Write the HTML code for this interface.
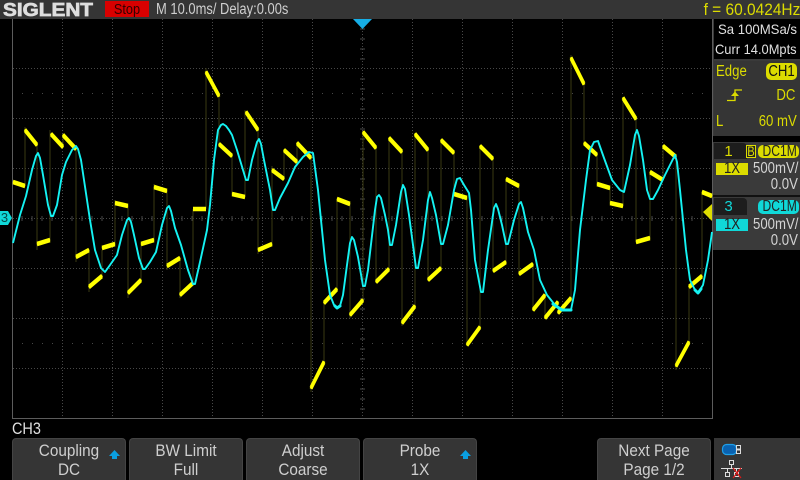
<!DOCTYPE html>
<html><head><meta charset="utf-8"><style>
html,body{margin:0;padding:0;background:#000;}
#s{position:relative;width:800px;height:480px;overflow:hidden;background:#000;font-family:"Liberation Sans",sans-serif;color:#d4d4d4;}
.a{position:absolute;white-space:nowrap;}
.l{transform:scaleX(.85);transform-origin:left center;}
.r{transform:scaleX(.85);transform-origin:right center;}
.c{transform:scaleX(.85);transform-origin:center center;}
.k{position:absolute;top:438px;height:42px;background:#353535;border:1px solid #444;border-bottom:none;border-radius:4px 4px 0 0;box-sizing:border-box;text-align:center;font-size:17px;line-height:19px;color:#cfcfcf;padding-top:2px;}
.k div{transform:scaleX(.9);white-space:nowrap;}
svg{position:absolute;left:0;top:0;}
</style></head><body><div id="s">
<div class="a" style="left:0;top:0;width:800px;height:19px;background:#353535"></div>
<div class="a" style="left:105px;top:1px;width:44px;height:16px;background:#d80000;"></div>
<div class="a c" style="left:105px;top:1px;width:44px;color:#300;font-size:15px;line-height:17px;text-align:center">Stop</div>
<div class="a" style="left:156px;top:1px;font-size:15.500px;line-height:18px;color:#cfcfcf;transform:scaleX(.835);transform-origin:left center">M 10.0ms/ Delay:0.00s</div>
<div class="a" style="right:0;top:0;font-size:17px;line-height:19px;color:#dcdc00;transform:scaleX(.91);transform-origin:right center">f = 60.0424Hz</div>

<svg width="800" height="480" viewBox="0 0 800 480">
<text x="3" y="16" font-family="Liberation Sans" font-weight="bold" font-size="18.500" textLength="90" lengthAdjust="spacingAndGlyphs" fill="#dedede" stroke="#dedede" stroke-width=".7">SIGLENT</text>
<g fill="none" stroke="#484848" stroke-width="1" shape-rendering="crispEdges">
<path stroke-dasharray="1 2" d="M62.500 19V418M112.500 19V418M162.500 19V418M212.500 19V418M262.500 19V418M312.500 19V418M412.500 19V418M462.500 19V418M512.500 19V418M562.500 19V418M612.500 19V418M662.500 19V418M13 68.500H712M13 118.500H712M13 168.500H712M13 268.500H712M13 318.500H712M13 368.500H712"/>
<path stroke-dasharray="1 2" d="M362.500 19V418M13 218.500H712"/>
<path stroke-dasharray="1 9" d="M22 93.500H712M22 343.500H712"/>
<path d="M22 216V221M32 216V221M42 216V221M52 216V221M72 216V221M82 216V221M92 216V221M102 216V221M122 216V221M132 216V221M142 216V221M152 216V221M172 216V221M182 216V221M192 216V221M202 216V221M222 216V221M232 216V221M242 216V221M252 216V221M272 216V221M282 216V221M292 216V221M302 216V221M322 216V221M332 216V221M342 216V221M352 216V221M372 216V221M382 216V221M392 216V221M402 216V221M422 216V221M432 216V221M442 216V221M452 216V221M472 216V221M482 216V221M492 216V221M502 216V221M522 216V221M532 216V221M542 216V221M552 216V221M572 216V221M582 216V221M592 216V221M602 216V221M622 216V221M632 216V221M642 216V221M652 216V221M672 216V221M682 216V221M692 216V221M702 216V221"/>
<path d="M360 29H365M360 39H365M360 49H365M360 59H365M360 79H365M360 89H365M360 99H365M360 109H365M360 129H365M360 139H365M360 149H365M360 159H365M360 179H365M360 189H365M360 199H365M360 209H365M360 229H365M360 239H365M360 249H365M360 259H365M360 279H365M360 289H365M360 299H365M360 309H365M360 329H365M360 339H365M360 349H365M360 359H365M360 379H365M360 389H365M360 399H365M360 409H365"/>
<path stroke="#5c5c5c" d="M12.500 19V418.500H712.500V19"/>
</g>
<path fill="none" stroke="#3a3a12" stroke-width="1" shape-rendering="crispEdges" d="M25 186V127M37 145V250M50 240V130M63 147V135M76 149V262M89 250V292M102 276V250M115 244V200M128 206V298M141 280V244M154 240V184M167 191V270M180 258V298M193 283V209M206 209V68M219 96V144M232 156V194M245 197V110M258 130V254M272 244V166M284 179V150M297 162V143M311 158V392M324 362V303M337 289V199M350 204V318M363 300V132M376 148V282M389 269V138M402 152V326M415 306V134M428 150V280M441 268V140M454 153V194M467 198V345M480 327V146M493 159V271M506 262V179M519 186V274M533 264V310M545 295V318M558 302V313M571 298V55M584 84V143M597 155V184M610 188V203M623 206V98M636 119V242M650 238V172M663 180V146M676 157V370M689 342V287M702 276V192"/>
<defs><path id="y" fill="none" stroke="#ffff00" stroke-width="3" d="M13 182L25 186M25 130L37 145M37 244L50 240M51 134L63 147M63 135L76 149M76 257L89 250M89 287L102 276M102 248L115 244M115 203L128 206M128 293L141 280M141 244L154 240M154 187L167 191M167 266L180 258M180 295L193 283M193 209L206 209M206 72L219 96M219 144L232 156M232 194L245 197M246 112L258 130M258 250L272 244M272 170L284 179M284 150L297 162M297 143L311 158M311 388L324 362M324 303L337 289M337 199L350 204M350 315L363 300M363 132L376 148M376 282L389 269M389 138L402 152M402 323L415 306M415 134L428 150M428 280L441 268M441 140L454 153M454 194L467 198M467 345L480 327M480 146L493 159M493 271L506 262M506 179L519 186M519 274L533 264M533 310L545 295M545 318L558 302M558 313L571 298M571 58L584 84M584 143L597 155M597 184L610 188M610 203L623 206M623 98L636 119M636 242L650 238M650 172L663 180M663 146L676 157M676 366L689 342M689 287L702 276M702 192L712 196"/></defs>
<use href="#y" y="-.800"/><use href="#y" y=".800"/>
<polyline fill="none" stroke="#14f2f2" stroke-width="1.900" stroke-linejoin="round" points="13,243 20,215 26,196 32,170 36,156 38,153 40,158 43,175 48,205 51,216 53,216 57,205 62,175 66,162 72,150 76,146 78,149 81,160 84,180 90,220 95,250 101,268 105,272 110,265 117,255 122,235 127,220 129,218 131,222 134,235 139,258 143,269 145,269 150,262 156,252 162,225 167,208 169,206 171,211 175,228 181,245 188,270 193,284 195,284 200,262 207,230 210,205 214,160 218,130 221,125 223,124 226,126 229,130 232,135 237,150 243,170 246,180 248,180 252,160 257,142 259,139 261,144 264,160 270,190 273,210 275,210 280,198 288,183 295,167 303,157 309,152 313,153 318,190 325,260 330,295 334,305 337,308 340,306 343,295 347,265 350,243 352,237 354,240 358,257 363,286 365,286 368,270 375,210 377,197 379,195 381,198 385,215 388,230 390,245 392,245 396,225 401,192 403,185 405,189 409,215 413,245 416,268 418,268 423,240 428,200 430,192 432,198 436,215 441,244 443,244 448,225 454,190 457,179 460,178 464,185 469,193 471,210 475,260 481,292 483,292 488,250 494,208 496,204 498,209 502,225 506,244 508,244 514,220 519,204 521,202 523,208 528,232 534,250 540,280 547,295 555,305 562,310 571,310 575,290 580,230 586,180 590,150 594,142 598,141 604,158 612,180 620,190 624,192 630,165 635,135 637,130 639,136 643,160 647,190 650,199 653,199 658,190 665,175 675,155 677,162 680,190 686,250 690,280 695,290 698,293 703,285 708,260 712,232"/>
<path fill="none" stroke="#14f2f2" stroke-width="3" stroke-linecap="round" stroke-linejoin="round" d="M335 306L337 308L340 306M553 304L562 310L571 310M695 290L698 293L701 289"/>
<path fill="#16aee6" d="M353 19H372L362.500 29Z"/>
<path fill="#10d8d8" d="M0 211H8L12 218L8 225H0Z"/>
<path fill="#dcdc00" d="M703 212L712 204V221Z"/>
</svg>
<div class="a" style="left:0;top:211px;width:9px;font-size:13px;line-height:14px;text-align:center;color:#064a4a">3</div>

<div class="a" style="left:713px;top:19px;width:87px;height:219px;background:#3a3a3a"></div>
<div class="a" style="left:714px;top:19px;width:86px;height:40px;background:#000"></div>
<div class="a" style="left:718px;top:21px;font-size:14px;line-height:17px;color:#e0e0e0;transform:scaleX(.94);transform-origin:left center">Sa 100MSa/s</div>
<div class="a" style="left:715px;top:41px;font-size:14px;line-height:17px;color:#e0e0e0;transform:scaleX(.92);transform-origin:left center">Curr 14.0Mpts</div>
<div class="a" style="left:714px;top:61px;width:86px;height:75px;background:#353535"></div>
<div class="a l" style="left:716px;top:63px;font-size:15.500px;line-height:18px;color:#dcdc00">Edge</div>
<div class="a" style="left:766px;top:63px;width:31px;height:17px;border-radius:5px;background:#dcdc00"></div>
<div class="a c" style="left:766px;top:63px;width:31px;color:#111;font-size:15.500px;line-height:17px;text-align:center">CH1</div>
<svg width="800" height="480" style="pointer-events:none"><path fill="none" stroke="#dcdc00" stroke-width="1.300" d="M727 100.500H735V90H742"/><path fill="#dcdc00" d="M731 96L735 91.500L739 96Z"/></svg>
<div class="a r" style="right:5px;top:87px;font-size:15.500px;line-height:18px;color:#dcdc00">DC</div>
<div class="a l" style="left:716px;top:113px;font-size:15.500px;line-height:18px;color:#dcdc00">L</div>
<div class="a r" style="right:3px;top:113px;font-size:15.500px;line-height:18px;color:#dcdc00">60 mV</div>
<div class="a" style="left:713px;top:136px;width:87px;height:6px;background:#000"></div>

<div class="a" style="left:713px;top:142px;width:87px;height:53px;background:#3a3a3a"></div>
<div class="a" style="left:714px;top:143px;width:29px;height:16px;background:#1d1d1d;color:#dcdc00;font-size:15px;line-height:17px;text-align:center">1</div>
<div class="a" style="left:743px;top:143px;width:4px;height:16px;background:#1d1d1d;border-radius:0 5px 0 0"></div>
<div class="a" style="left:746px;top:145px;width:8px;height:11px;border:1px solid #dcdc00;background:#222;"></div>
<div class="a" style="left:746px;top:144px;width:10px;color:#dcdc00;font-size:14px;line-height:15px;text-align:center;transform:scaleX(.8)">B</div>
<div class="a" style="left:758px;top:145px;width:41px;height:13px;border-radius:5px;background:#dcdc00"></div>
<div class="a" style="left:758px;top:144px;width:41px;color:#222;font-size:15.500px;line-height:15px;text-align:center;transform:scaleX(.78)">DC1M</div>
<div class="a" style="left:716px;top:163px;width:32px;height:12px;background:#dcdc00"></div>
<div class="a c" style="left:716px;top:161px;width:32px;color:#222;font-size:15.500px;line-height:16px;text-align:center">1X</div>
<div class="a r" style="right:2px;top:161px;font-size:15.500px;line-height:16px;color:#d4d4d4">500mV/</div>
<div class="a r" style="right:2px;top:177px;font-size:15.500px;line-height:16px;color:#d4d4d4">0.0V</div>

<div class="a" style="left:713px;top:195px;width:87px;height:2px;background:#111"></div>
<div class="a" style="left:713px;top:197px;width:87px;height:53px;background:#3a3a3a"></div>
<div class="a" style="left:714px;top:198px;width:29px;height:17px;background:#1d1d1d;color:#10d8d8;font-size:15px;line-height:18px;text-align:center">3</div>
<div class="a" style="left:743px;top:198px;width:4px;height:17px;background:#1d1d1d;border-radius:0 5px 0 0"></div>
<div class="a" style="left:758px;top:200px;width:41px;height:14px;border-radius:5px;background:#10d8d8"></div>
<div class="a" style="left:758px;top:199px;width:41px;color:#222;font-size:15.500px;line-height:16px;text-align:center;transform:scaleX(.78)">DC1M</div>
<div class="a" style="left:716px;top:219px;width:32px;height:12px;background:#10d8d8"></div>
<div class="a c" style="left:716px;top:217px;width:32px;color:#222;font-size:15.500px;line-height:16px;text-align:center">1X</div>
<div class="a r" style="right:2px;top:217px;font-size:15.500px;line-height:16px;color:#d4d4d4">500mV/</div>
<div class="a r" style="right:2px;top:233px;font-size:15.500px;line-height:16px;color:#d4d4d4">0.0V</div>
<div class="a" style="left:713px;top:250px;width:87px;height:188px;background:#000"></div>

<div class="a l" style="left:12px;top:420px;font-size:17px;line-height:18px;color:#e0e0e0">CH3</div>
<div class="k" style="left:12px;width:114px"><div>Coupling</div><div>DC</div></div>
<div class="k" style="left:129px;width:114px"><div>BW Limit</div><div>Full</div></div>
<div class="k" style="left:246px;width:114px"><div>Adjust</div><div>Coarse</div></div>
<div class="k" style="left:363px;width:114px"><div>Probe</div><div>1X</div></div>
<div class="k" style="left:597px;width:114px"><div>Next Page</div><div>Page 1/2</div></div>
<div class="a" style="left:714px;top:438px;width:86px;height:42px;background:#353535"></div>
<svg width="800" height="480">
<path fill="#0a9fe0" d="M114.500 450L120 456H117V459H112V456H109Z"/>
<path fill="#0a9fe0" d="M465.500 450L471 456H468V459H463V456H460Z"/>
<rect x="722.500" y="444.500" width="14" height="10" rx="4" fill="#0a62b0" stroke="#1f9fe8" stroke-width="1.200"/>
<rect x="736" y="445" width="5" height="9" fill="#ddd"/>
<rect x="737" y="446" width="3" height="2.500" fill="#333"/><rect x="737" y="450.500" width="3" height="2.500" fill="#333"/>
<g fill="none" stroke="#ddd" stroke-width="1" shape-rendering="crispEdges">
<rect x="729.500" y="460.500" width="4" height="4"/><rect x="725.500" y="472.500" width="4" height="4"/><rect x="734.500" y="472.500" width="4" height="4"/>
<path d="M731.500 465V468.500M721 468.500H742M727.500 469V472M736.500 469V472"/>
</g>
<path stroke="#e01818" stroke-width="1.200" fill="none" d="M733 468L741 478M741 468L733 478"/>
</svg>
</div></body></html>
